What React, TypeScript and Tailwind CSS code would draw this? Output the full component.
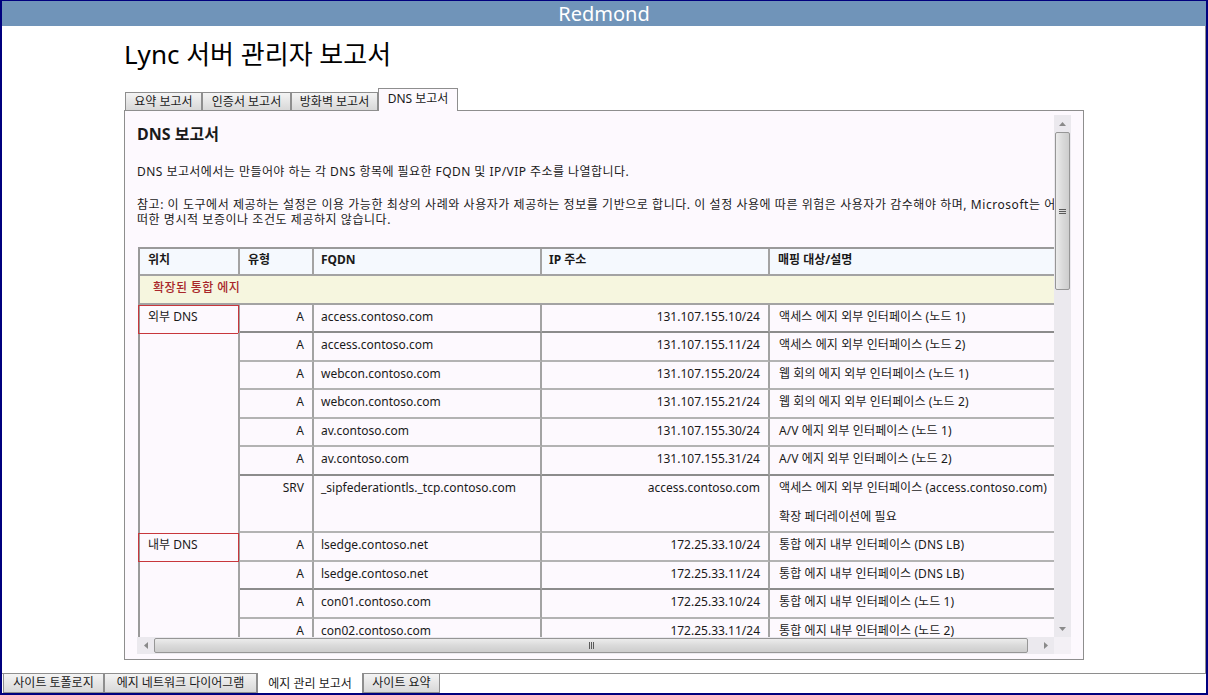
import React from "react";

const FONT = { fontFamily: "'Noto Sans', 'Noto Sans CJK KR', sans-serif" };

type Row = {
  loc?: string;
  type: string;
  fqdn: string;
  ip: string;
  desc: string[];
  h: string;
  dark?: boolean;
};

const rows: Row[] = [
  { loc: "외부 DNS", type: "A", fqdn: "access.contoso.com", ip: "131.107.155.10/24", desc: ["액세스 에지 외부 인터페이스 (노드 1)"], h: "h-[28px]", dark: true },
  { type: "A", fqdn: "access.contoso.com", ip: "131.107.155.11/24", desc: ["액세스 에지 외부 인터페이스 (노드 2)"], h: "h-[29px]" },
  { type: "A", fqdn: "webcon.contoso.com", ip: "131.107.155.20/24", desc: ["웹 회의 에지 외부 인터페이스 (노드 1)"], h: "h-[28px]" },
  { type: "A", fqdn: "webcon.contoso.com", ip: "131.107.155.21/24", desc: ["웹 회의 에지 외부 인터페이스 (노드 2)"], h: "h-[29px]" },
  { type: "A", fqdn: "av.contoso.com", ip: "131.107.155.30/24", desc: ["A/V 에지 외부 인터페이스 (노드 1)"], h: "h-[28px]" },
  { type: "A", fqdn: "av.contoso.com", ip: "131.107.155.31/24", desc: ["A/V 에지 외부 인터페이스 (노드 2)"], h: "h-[29px]", dark: true },
  { type: "SRV", fqdn: "_sipfederationtls._tcp.contoso.com", ip: "access.contoso.com", desc: ["액세스 에지 외부 인터페이스 (access.contoso.com)", "확장 페더레이션에 필요"], h: "h-[57px]" },
  { loc: "내부 DNS", type: "A", fqdn: "lsedge.contoso.net", ip: "172.25.33.10/24", desc: ["통합 에지 내부 인터페이스 (DNS LB)"], h: "h-[29px]" },
  { type: "A", fqdn: "lsedge.contoso.net", ip: "172.25.33.11/24", desc: ["통합 에지 내부 인터페이스 (DNS LB)"], h: "h-[28px]", dark: true },
  { type: "A", fqdn: "con01.contoso.com", ip: "172.25.33.10/24", desc: ["통합 에지 내부 인터페이스 (노드 1)"], h: "h-[29px]" },
  { type: "A", fqdn: "con02.contoso.com", ip: "172.25.33.11/24", desc: ["통합 에지 내부 인터페이스 (노드 2)"], h: "h-[28px]" },
  { type: "A", fqdn: "con03.contoso.com", ip: "172.25.33.12/24", desc: ["통합 에지 내부 인터페이스 (노드 3)"], h: "h-[29px]" },
];

function UpArrow() {
  return (
    <svg width="7" height="4" viewBox="0 0 7 4"><polygon points="0,4 7,4 3.5,0" fill="#8a8a8a" /></svg>
  );
}
function DownArrow() {
  return (
    <svg width="7" height="4" viewBox="0 0 7 4"><polygon points="0,0 7,0 3.5,4" fill="#8a8a8a" /></svg>
  );
}
function LeftArrow() {
  return (
    <svg width="4" height="7" viewBox="0 0 4 7"><polygon points="4,0 4,7 0,3.5" fill="#8a8a8a" /></svg>
  );
}
function RightArrow() {
  return (
    <svg width="4" height="7" viewBox="0 0 4 7"><polygon points="0,0 0,7 4,3.5" fill="#8a8a8a" /></svg>
  );
}

function Table() {
  return (
    <div className="ml-[1px] mt-[20px] w-[962px] border-l-2 border-t-2 border-[#9a9a9a] text-[12px] leading-[16px] text-[#1a1a1a]">
      {/* header */}
      <div className="flex h-[27px] bg-[#f5f9fe] border-b-2 border-[#a3a3a3] font-bold">
        <div className="w-[100px] shrink-0 border-r-2 border-[#a3a3a3] pl-[8px] pt-[3px]">위치</div>
        <div className="w-[74px] shrink-0 border-r-2 border-[#a3a3a3] pl-[8px] pt-[3px]">유형</div>
        <div className="w-[228px] shrink-0 border-r-2 border-[#a3a3a3] pl-[7px] pt-[3px]">FQDN</div>
        <div className="w-[228px] shrink-0 border-r-2 border-[#a3a3a3] pl-[7px] pt-[3px]">IP 주소</div>
        <div className="w-[330px] shrink-0 border-r-2 border-[#a3a3a3] pl-[8px] pt-[3px]">매핑 대상/설명</div>
      </div>
      {/* group row */}
      <div className="h-[29px] bg-[#f6f6df] border-b-2 border-[#a3a3a3] pl-[13px] pt-[4px] text-[#a8262a] font-medium tracking-[0.4px]">
        확장된 통합 에지
      </div>
      {rows.map((r, i) => {
        const b = r.dark ? "border-[#8c8c8c]" : "border-[#b3b3b3]";
        return (
          <div key={i} className={`flex ${r.h}`}>
            <div className="relative w-[100px] shrink-0 border-r-2 border-[#a3a3a3]">
              {r.loc && (
                <div className="absolute left-[-2px] top-0 w-[101px] h-[29px] border border-[#c8373c] pl-[9px] pt-[3px]">
                  {r.loc}
                </div>
              )}
            </div>
            <div className={`w-[74px] shrink-0 border-r-2 border-r-[#a3a3a3] border-b-2 ${b} pr-[8px] pt-[4px] text-right`}>{r.type}</div>
            <div className={`w-[228px] shrink-0 border-r-2 border-r-[#a3a3a3] border-b-2 ${b} pl-[7px] pt-[4px] whitespace-nowrap`}>{r.fqdn}</div>
            <div className={`w-[228px] shrink-0 border-r-2 border-r-[#a3a3a3] border-b-2 ${b} pr-[8px] pt-[4px] text-right whitespace-nowrap`}>{r.ip}</div>
            <div className={`w-[330px] shrink-0 border-r-2 border-r-[#a3a3a3] border-b-2 ${b} pl-[9px] pt-[4px] whitespace-nowrap tracking-[0.1px]`}>
              {r.desc.map((d, j) => (
                <div key={j} className={j > 0 ? "mt-[13px]" : ""}>{d}</div>
              ))}
            </div>
          </div>
        );
      })}
    </div>
  );
}

function Panel() {
  return (
    <div className="relative w-[960px] h-[550px] border border-[#8e8e8e] bg-[#fdf9fe] pl-[12px] pr-[11px] pt-[4px]">
      <div className="grid grid-cols-[917px_17px] grid-rows-[522px_17px]">
        {/* viewport */}
        <div className="overflow-hidden text-[#1a1a1a]">
          <div className="pt-[9px] text-[16px] leading-[20px] font-bold">DNS 보고서</div>
          <div className="mt-[20px] text-[12px] leading-[15px] whitespace-nowrap tracking-[0.45px]">
            DNS 보고서에서는 만들어야 하는 각 DNS 항목에 필요한 FQDN 및 IP/VIP 주소를 나열합니다.
          </div>
          <div className="mt-[18px] text-[12px] leading-[15px] whitespace-nowrap tracking-[0.55px]">
            <div>참고: 이 도구에서 제공하는 설정은 이용 가능한 최상의 사례와 사용자가 제공하는 정보를 기반으로 합니다. 이 설정 사용에 따른 위험은 사용자가 감수해야 하며, Microsoft는 어</div>
            <div>떠한 명시적 보증이나 조건도 제공하지 않습니다.</div>
          </div>
          <Table />
        </div>
        {/* vertical scrollbar */}
        <div className="relative bg-[#ebe9ee]">
          <div className="absolute left-0 top-0 w-[17px] h-[17px] flex items-center justify-center"><UpArrow /></div>
          <div className="absolute left-[1px] top-[17px] w-[15px] h-[158px] rounded-[2px] border border-[#969696] bg-gradient-to-r from-[#ececec] via-[#dadada] to-[#cdcdcd] flex flex-col items-center justify-center gap-[1px]">
            <div className="w-[7px] h-[1px] bg-[#5a5a5a]" />
            <div className="w-[7px] h-[1px] bg-[#5a5a5a]" />
            <div className="w-[7px] h-[1px] bg-[#5a5a5a]" />
          </div>
          <div className="absolute left-0 bottom-0 w-[17px] h-[17px] flex items-center justify-center"><DownArrow /></div>
        </div>
        {/* horizontal scrollbar */}
        <div className="relative bg-[#ebe9ee]">
          <div className="absolute left-0 top-0 w-[17px] h-[17px] flex items-center justify-center"><LeftArrow /></div>
          <div className="absolute left-[17px] top-[1px] w-[874px] h-[15px] rounded-[2px] border border-[#969696] bg-gradient-to-b from-[#ececec] via-[#dadada] to-[#cdcdcd] flex items-center justify-center gap-[1px]">
            <div className="w-[1px] h-[7px] bg-[#5a5a5a]" />
            <div className="w-[1px] h-[7px] bg-[#5a5a5a]" />
            <div className="w-[1px] h-[7px] bg-[#5a5a5a]" />
          </div>
          <div className="absolute right-0 top-0 w-[17px] h-[17px] flex items-center justify-center"><RightArrow /></div>
        </div>
        <div className="bg-[#f3f0f5]" />
      </div>
    </div>
  );
}

function TopTab({ label, w, selected }: { label: string; w: string; selected?: boolean }) {
  if (selected) {
    return (
      <div className={`${w} h-[23px] border border-b-0 border-[#8e8e8e] bg-[#fdf9fe] relative z-10 text-center pt-[2px] leading-[16px]`}>
        {label}
      </div>
    );
  }
  return (
    <div className={`${w} h-[19px] border border-[#8e8e8e] bg-gradient-to-b from-[#f4f4f4] to-[#d8d8d8] text-center leading-[16px] pt-[1px]`}>
      {label}
    </div>
  );
}

function BottomTab({ label, w, selected }: { label: string; w: string; selected?: boolean }) {
  if (selected) {
    return (
      <div className={`${w} h-[21px] -mt-[1px] border border-t-0 border-[#8e8e8e] bg-white relative z-10 text-center leading-[16px] pt-[3px]`}>
        {label}
      </div>
    );
  }
  return (
    <div className={`${w} h-[19px] border border-t-0 border-[#8e8e8e] bg-gradient-to-b from-[#f4f4f4] to-[#d8d8d8] text-center leading-[16px] pt-[1px]`}>
      {label}
    </div>
  );
}

export default function App() {
  return (
    <div
      style={FONT}
      className="w-[1208px] h-[695px] flex flex-col bg-white border-t border-l-2 border-r-2 border-b-2 border-[#00007e] overflow-hidden text-[#1a1a1a]"
    >
      <div className="h-[25px] shrink-0 bg-[#7094b9] text-white text-[20px] leading-[25px] text-center">Redmond</div>
      <div className="h-[648px] shrink-0 border-r border-b border-[#8e8e8e] pl-[122px]">
        <h1 className="mt-[10px] text-[26px] leading-[36px] font-normal text-black">Lync 서버 관리자 보고서</h1>
        <div className="mt-[16px] flex items-end pl-[1px] text-[12px] -mb-[1px] relative z-10">
          <TopTab label="요약 보고서" w="w-[77px]" />
          <TopTab label="인증서 보고서" w="w-[89px]" />
          <TopTab label="방화벽 보고서" w="w-[87px]" />
          <TopTab label="DNS 보고서" w="w-[80px]" selected />
        </div>
        <Panel />
      </div>
      <div className="flex pl-[1px] text-[12px] items-start">
        <BottomTab label="사이트 토폴로지" w="w-[101px]" />
        <BottomTab label="에지 네트워크 다이어그램" w="w-[153px]" />
        <BottomTab label="에지 관리 보고서" w="w-[106px]" selected />
        <BottomTab label="사이트 요약" w="w-[77px]" />
      </div>
    </div>
  );
}
